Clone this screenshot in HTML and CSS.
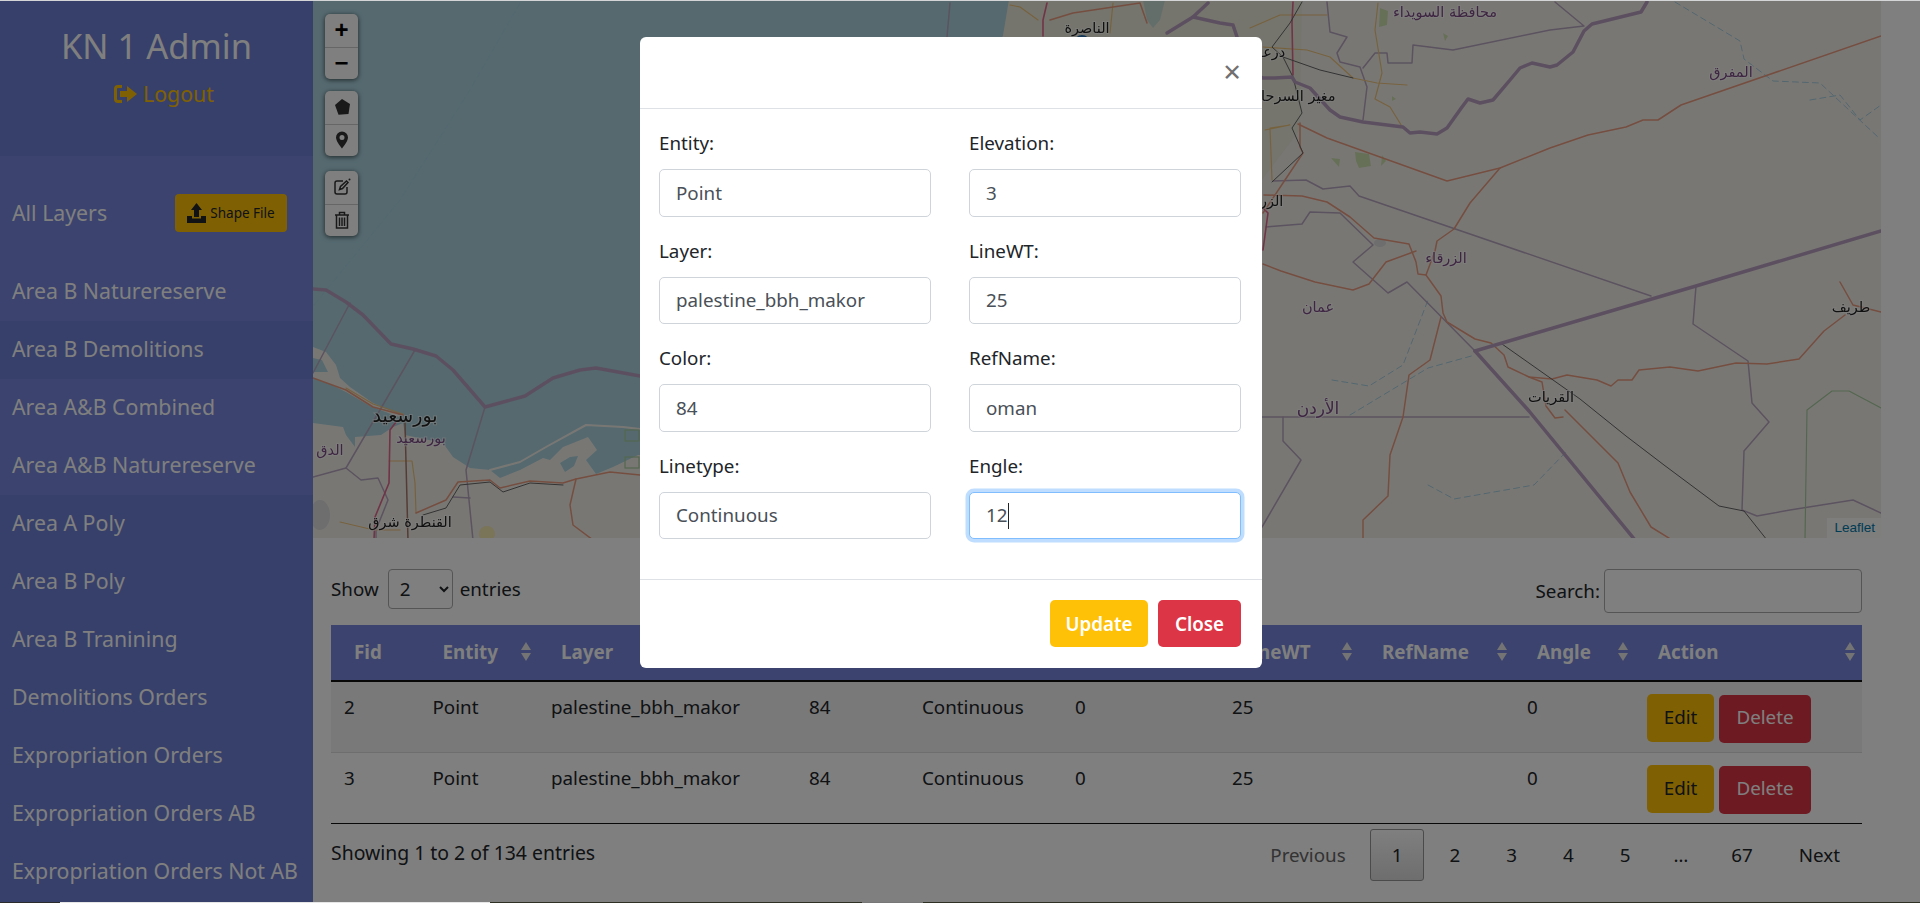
FILE: index.html
```html
<!DOCTYPE html>
<html lang="en">
<head>
  <meta charset="UTF-8">
  <title>KN 1 Admin</title>
  <link rel="stylesheet" href="styles.css">
</head>
<body>
  <div class="edge-top"></div>
  <div class="app">
    <aside class="sidebar">
      <div class="side-head">
        <h1>KN 1 Admin</h1>
        <a class="logout" href="#">
          <svg width="24" height="18" viewBox="0 0 24 18"><path d="M8 0H4a4 4 0 0 0-4 4v10a4 4 0 0 0 4 4h4v-3H4a1 1 0 0 1-1-1V4a1 1 0 0 1 1-1h4zM13 1l10 8-10 8v-5H6V6h7z"/></svg>
          Logout
        </a>
      </div>
      <div class="layers-head">
        <span>All Layers</span>
        <button class="shape-btn">
          <svg width="19" height="20" viewBox="0 0 19 20"><path d="M9.5 0L15 7h-3v7H7V7H4zM0 13h5v2.5h9V13h5v7H0z"/></svg>
          Shape File
        </button>
      </div>
      <ul class="layer-list">
        <li class="lite">Area B Naturereserve</li>
        <li>Area B Demolitions</li>
        <li class="lite">Area A&amp;B Combined</li>
        <li class="lite">Area A&amp;B Naturereserve</li>
        <li>Area A Poly</li>
        <li>Area B Poly</li>
        <li>Area B Tranining</li>
        <li>Demolitions Orders</li>
        <li>Expropriation Orders</li>
        <li>Expropriation Orders AB</li>
        <li>Expropriation Orders Not AB</li>
      </ul>
    </aside>

    <main class="main">
      <div class="map">
        <svg class="map-svg" width="1568" height="537" viewBox="313 1 1568 537">
          <rect class="sea" x="313" y="0" width="1568" height="540"/>
          <!-- land -->
          <polygon class="land" points="313,540 313,423 343,427 346,435 355,447 355,437 381,435 393,427 403,423 405,435 443,443 453,457 470,468 490,470 500,478 520,470 543,458 550,460 563,447 588,437 597,450 586,460 596,474 613,467 638,455 640,455 1003,36 1009,0 1881,0 1881,540"/>
          <polygon class="land" points="313,347 326,352 336,365 340,378 350,387 373,403 396,413 403,418 396,416 370,406 346,392 330,384 313,378"/>
          <polygon class="sea" points="313,358 322,360 328,372 313,372"/>
          <polygon class="sea" points="560,463 570,457 578,456 574,466 565,472"/>
          <polygon class="sea" points="1143,0 1165,0 1160,20 1153,28 1147,20"/>
          <polygon class="tint" points="1009,0 1302,0 1300,130 1262,180 1003,36"/>
          <polyline class="sand" points="490,470 520,462 546,447 586,425 623,427 640,429"/>
          <ellipse class="urban" cx="320" cy="515" rx="10" ry="15"/>
          <ellipse class="urban" cx="1380" cy="243" rx="6" ry="4"/>
          <circle class="desert" cx="487" cy="534" r="8"/>
          <path class="park" d="M1380 8l8 3-1 14-8 2zM1355 152l14 2 2 12-12 2-3-7zM1382 155l4 6-5 5z"/>
          <path class="park" d="M1443 33l5 3-3 5zM1392 96l4 3-4 2zM1331 158l9 1-1 8z"/>
          <!-- wadis -->
          <polyline class="wadi" points="1675,2 1740,41 1744,59 1773,81 1820,83 1879,138"/>
          <polyline class="wadi" points="1332,380 1369,386 1403,365 1428,300"/>
          <polyline class="wadi" points="1350,415 1428,368 1475,355"/>
          <polyline class="wadi" points="1428,485 1454,499 1534,485 1567,451"/>
          <polyline class="wadi" points="1810,100 1840,95 1860,120 1881,105"/>
          <polyline class="wadi" points="520,3 470,90 400,200 314,305"/>
          <!-- boundaries -->
          <polyline class="admin" points="350,303 313,373"/>
          <polyline class="admin" points="415,350 346,468 313,477"/>
          <polyline class="admin" points="346,468 361,480 378,478 388,500 376,530 376,540"/>
          <polyline class="admin" points="485,407 466,470 473,540"/>
          <polyline class="admin" points="453,497 470,498"/>
          <polyline class="admin" points="950,3 947,37"/>
          <polyline class="admin" points="1273,181 1306,180 1323,189 1350,186 1359,196 1651,296"/>
          <polyline class="admin" points="1696,286 1693,324 1748,361 1752,403 1769,422 1744,451 1742,510 1757,516 1790,510 1853,500 1881,513"/>
          <polyline class="admin" points="1266,227 1302,224 1310,212 1340,213 1373,245 1353,262 1388,293 1407,282 1475,351"/>
          <polyline class="admin" points="1262,417 1529,417"/>
          <polyline class="admin" points="1283,417 1283,441 1301,460 1262,527"/>
          <polyline class="admin" points="1327,2 1330,32 1347,37 1337,53 1340,62 1360,67 1367,87 1363,120"/>
          <polyline class="admin" points="1363,68 1375,53 1387,53 1388,63 1412,63 1413,45 1453,50 1550,30 1584,26 1555,2"/>
          <polyline class="natres" points="1881,408 1849,391 1832,391 1807,410 1805,540"/>
          <rect class="natres" x="625" y="430" width="14" height="11"/>
          <rect class="natres" x="625" y="457" width="14" height="11"/>
          <!-- roads -->
          <polyline class="minor" points="389,461 412,461 415,483 416,513"/>
          <polyline class="minor" points="346,388 373,404 403,414"/>
          <polyline class="minor" points="340,522 374,530 400,530"/>
          <polyline class="minor" points="1250,28 1280,15 1327,15"/>
          <polyline class="minor" points="1263,47 1307,50 1330,57 1353,78 1377,83 1407,85"/>
          <polyline class="minor" points="1378,3 1375,30 1382,73 1375,99 1390,107 1403,128"/>
          <polyline class="minor" points="1010,5 1020,7 1038,20"/>
          <polyline class="minor" points="1113,3 1110,33"/>
          <polyline class="minor" points="1265,130 1290,125 1270,128 1272,180"/>
          <polyline class="road" points="313,378 346,390 373,407 403,415"/>
          <polyline class="road" points="416,513 446,500 458,482 490,480 500,488 530,481 563,483 576,479 610,472 640,475"/>
          <polyline class="road" points="576,479 570,505 573,525 593,540"/>
          <polyline class="road" points="1298,124 1327,138 1447,181 1500,168 1550,148 1588,135 1626,127 1643,120 1658,120 1681,105 1881,36"/>
          <polyline class="road" points="1500,168 1470,203 1454,229 1437,241 1435,251 1426,275"/>
          <polyline class="road" points="1264,195 1302,196 1327,202 1350,217 1374,238 1409,244 1416,262 1418,274 1426,275 1441,296 1443,313 1447,322 1475,339 1491,343 1504,355 1508,367 1529,377 1552,379 1567,375 1597,380 1611,386 1618,380 1632,380 1639,370 1670,367 1698,371 1736,363 1767,364 1799,359 1824,331 1845,315"/>
          <polyline class="road" points="1840,282 1853,305 1881,312"/>
          <polyline class="road" points="1263,264 1281,271 1315,282 1353,290 1369,284 1386,262 1416,251"/>
          <polyline class="road" points="1441,317 1430,360 1409,375 1403,417 1390,455 1388,496 1363,520 1363,540"/>
          <polyline class="road" points="1565,410 1618,463 1630,492 1651,527 1672,540"/>
          <polyline class="road" points="1529,377 1542,382 1546,406 1555,418 1563,417"/>
          <polyline class="road" points="1300,123 1300,147 1303,153 1283,183 1263,213"/>
          <polyline class="road" points="1050,20 1073,13 1140,3 1147,23"/>
          <polyline class="pink" points="396,422 390,430 389,483 375,517 374,540"/>
          <polyline class="pink" points="1293,2 1292,23 1293,75"/>
          <polyline class="pink" points="1263,250 1268,213 1263,208"/>
          <polyline class="pink" points="1047,3 1043,20 1043,36"/>
          <polyline class="rail" points="423,515 446,508 460,485 490,482 503,492 530,483 563,485"/>
          <polyline class="rail" points="1302,2 1290,23 1272,47 1283,57 1320,70 1353,78"/>
          <polyline class="rail" points="1283,57 1293,77 1302,113 1292,128 1303,153 1272,182"/>
          <polyline class="rail" points="1502,344 1580,399 1626,436 1664,465 1719,506 1744,511 1767,540"/>
          <polyline class="trunk" points="405,423 408,540"/>
          <!-- thick country borders -->
          <polyline class="border" points="313,289 326,290 346,302 363,315 391,344 413,349 436,356 453,370 485,407 525,396 553,378 580,370 596,368 640,376"/>
          <polyline class="border" points="1647,2 1641,12 1592,24 1584,31 1573,52 1557,65 1550,67 1532,63 1520,68 1510,80 1493,100 1480,103 1468,99 1462,107 1447,128 1437,134 1420,132 1410,133 1403,127 1363,122 1340,117 1330,110 1310,88 1295,82 1292,77 1275,78 1263,78 1240,70"/>
          <polyline class="border" points="1208,3 1193,17 1220,23 1233,25 1237,37"/>
          <polyline class="border" points="1167,33 1193,17"/>
          <polyline class="border" points="1475,351 1696,286 1881,231"/>
          <polyline class="border" points="1475,351 1529,411 1635,540"/>
          <circle class="pin" cx="1082" cy="43" r="8"/>
          <!-- labels -->
          <text class="lbl city huge" x="405" y="422">بورسعيد</text>
          <text class="lbl region" x="421" y="443">بورسعيد</text>
          <text class="lbl region" x="330" y="455">الدق</text>
          <text class="lbl city" x="410" y="527">القنطرة شرق</text>
          <text class="lbl city" x="1087" y="33">الناصرة</text>
          <text class="lbl region" x="1445" y="17">محافظة السويداء</text>
          <text class="lbl city" x="1272" y="57">درعا</text>
          <text class="lbl city" x="1293" y="101">مغير السرحان</text>
          <text class="lbl city" x="1266" y="206">الزرقا</text>
          <text class="lbl region" x="1446" y="263">الزرقاء</text>
          <text class="lbl region" x="1731" y="77">المفرق</text>
          <text class="lbl region" x="1318" y="312">عمان</text>
          <text class="lbl region big" x="1318" y="414">الأردن</text>
          <text class="lbl city" x="1551" y="402">القريات</text>
          <text class="lbl city" x="1851" y="312">طريف</text>
        </svg>

        <div class="map-controls">
          <div class="ctl-group">
            <a class="ctl zoom-ctl">+</a>
            <a class="ctl zoom-ctl">&#8722;</a>
          </div>
          <div class="ctl-group">
            <a class="ctl"><svg width="20" height="20" viewBox="0 0 20 20"><path class="ico-fill" d="M10 2l8 5-1.5 10-10 .8L3 8z"/></svg></a>
            <a class="ctl"><svg width="16" height="20" viewBox="0 0 16 20"><path class="ico-fill" d="M8 1.500a6 6 0 0 0-6 6c0 4 6 11 6 11s6-7 6-11a6 6 0 0 0-6-6zm0 3.500a2.500 2.500 0 1 1 0 5 2.500 2.500 0 0 1 0-5z" fill-rule="evenodd"/></svg></a>
          </div>
          <div class="ctl-group draw-group">
            <a class="ctl"><svg width="20" height="20" viewBox="0 0 20 20"><path class="ico-line" d="M11 4H5a2 2 0 0 0-2 2v9a2 2 0 0 0 2 2h8a2 2 0 0 0 2-2v-5"/><path class="ico-line" d="M7.500 12.500l1-3 6-5.500 1.500 1.500-5.500 6z"/><circle class="ico-fill" cx="17.500" cy="2.500" r="1"/></svg></a>
            <a class="ctl"><svg width="18" height="20" viewBox="0 0 18 20"><path class="ico-line" d="M2 5h14M6.500 5V2.500h5V5M3.500 5v13h11V5M6.500 7.500V16M9 7.500V16M11.500 7.500V16"/></svg></a>
          </div>
        </div>
        <div class="attribution"><a href="#">Leaflet</a></div>
      </div>

      <section class="tools">
        <div class="dt-top">
          <label class="dt-length">Show
            <select><option>2</option><option>10</option><option>25</option></select>
            entries</label>
          <label class="dt-search">Search:<input type="text"></label>
        </div>

        <table class="dt">
          <colgroup>
            <col class="c-fid"><col class="c-entity"><col class="c-layer"><col class="c-color"><col class="c-linetype">
            <col class="c-elev"><col class="c-linewt"><col class="c-ref"><col class="c-angle"><col class="c-action">
          </colgroup>
          <thead>
            <tr>
              <th>Fid</th>
              <th class="sort">Entity<svg width="10" height="19" viewBox="0 0 10 19"><path d="M5 0l5 8H0zM5 19l-5-8h10z"/></svg></th>
              <th class="sort">Layer<svg width="10" height="19" viewBox="0 0 10 19"><path d="M5 0l5 8H0zM5 19l-5-8h10z"/></svg></th>
              <th class="sort">Color<svg width="10" height="19" viewBox="0 0 10 19"><path d="M5 0l5 8H0zM5 19l-5-8h10z"/></svg></th>
              <th class="sort">Linetype<svg width="10" height="19" viewBox="0 0 10 19"><path d="M5 0l5 8H0zM5 19l-5-8h10z"/></svg></th>
              <th class="sort">Elevation<svg width="10" height="19" viewBox="0 0 10 19"><path d="M5 0l5 8H0zM5 19l-5-8h10z"/></svg></th>
              <th class="sort">LineWT<svg width="10" height="19" viewBox="0 0 10 19"><path d="M5 0l5 8H0zM5 19l-5-8h10z"/></svg></th>
              <th class="sort">RefName<svg width="10" height="19" viewBox="0 0 10 19"><path d="M5 0l5 8H0zM5 19l-5-8h10z"/></svg></th>
              <th class="sort">Angle<svg width="10" height="19" viewBox="0 0 10 19"><path d="M5 0l5 8H0zM5 19l-5-8h10z"/></svg></th>
              <th class="sort">Action<svg width="10" height="19" viewBox="0 0 10 19"><path d="M5 0l5 8H0zM5 19l-5-8h10z"/></svg></th>
            </tr>
          </thead>
          <tbody>
            <tr>
              <td>2</td><td>Point</td><td>palestine_bbh_makor</td><td>84</td><td>Continuous</td><td>0</td><td>25</td><td></td><td>0</td>
              <td class="actions"><button class="btn-edit">Edit</button><button class="btn-del">Delete</button></td>
            </tr>
            <tr>
              <td>3</td><td>Point</td><td>palestine_bbh_makor</td><td>84</td><td>Continuous</td><td>0</td><td>25</td><td></td><td>0</td>
              <td class="actions"><button class="btn-edit">Edit</button><button class="btn-del">Delete</button></td>
            </tr>
          </tbody>
        </table>

        <div class="dt-bottom">
          <div class="dt-info">Showing 1 to 2 of 134 entries</div>
          <div class="pager">
            <a class="off">Previous</a>
            <a class="current">1</a>
            <a>2</a>
            <a>3</a>
            <a>4</a>
            <a>5</a>
            <span>&hellip;</span>
            <a>67</a>
            <a>Next</a>
          </div>
        </div>
      </section>
    </main>

    <div class="backdrop">
      <div class="modal">
        <div class="modal-head"><span class="close-x">&times;</span></div>
        <form class="modal-body">
          <div class="field"><label>Entity:</label><input type="text" value="Point"></div>
          <div class="field"><label>Elevation:</label><input type="text" value="3"></div>
          <div class="field"><label>Layer:</label><input type="text" value="palestine_bbh_makor"></div>
          <div class="field"><label>LineWT:</label><input type="text" value="25"></div>
          <div class="field"><label>Color:</label><input type="text" value="84"></div>
          <div class="field"><label>RefName:</label><input type="text" value="oman"></div>
          <div class="field"><label>Linetype:</label><input type="text" value="Continuous"></div>
          <div class="field"><label>Engle:</label>
            <div class="caret-wrap"><input class="focused" type="text" value="12"><span class="caret"></span></div>
          </div>
        </form>
        <div class="modal-foot">
          <button class="btn-update">Update</button>
          <button class="btn-close">Close</button>
        </div>
      </div>
    </div>
  </div>
  <div class="edge-bottom"></div>
</body>
</html>
```

FILE: styles.css
```css
* {
  box-sizing: border-box;
}
html, body {
  margin: 0;
  height: 903px;
  overflow: hidden;
}
body {
  font-family: "Noto Sans", "Open Sans", sans-serif;
  font-size: 18.800px;
  color: #212529;
  background-color: #ffffff;
}
button, input, select {
  font-family: inherit;
  font-size: inherit;
}
a {
  text-decoration: none;
  color: inherit;
}

.edge-top {
  height: 1px;
  background-color: #d4d5d6;
}
.edge-bottom {
  height: 1px;
  background: linear-gradient(to right, #2b2b2b 60px, #e6e6e6 60px, #e6e6e6 490px, #2e3024 490px, #2e3024 862px, #777777 862px, #777777 923px, #2e3024 923px);
}
.app {
  position: relative;
  display: flex;
  height: 901px;
}

/* sidebar */
.sidebar {
  width: 313px;
  flex: none;
  display: flex;
  flex-direction: column;
  background-color: #6e80d4;
  color: #ffffff;
  font-size: 21.300px;
}
.side-head {
  height: 155px;
  padding-top: 25px;
  text-align: center;
}
.side-head h1 {
  margin: 0;
  font-size: 34.500px;
  font-weight: 400;
  line-height: 40px;
}
.logout {
  display: inline-flex;
  align-items: center;
  gap: 5px;
  margin: 13px 0 0 15px;
  color: #ffc107;
}
.logout svg {
  fill: #ffc107;
}
.layers-head {
  height: 107px;
  padding: 6px 26px 0 12px;
  display: flex;
  align-items: center;
  justify-content: space-between;
  background-color: #7686dc;
}
.shape-btn {
  width: 112px;
  height: 38px;
  display: flex;
  align-items: center;
  justify-content: center;
  gap: 4px;
  border: none;
  border-radius: 4px;
  background-color: #ffc107;
  color: #212529;
  font-size: 13.500px;
}
.shape-btn svg {
  fill: #212529;
}
.layer-list {
  list-style: none;
  margin: 0;
  padding: 0;
}
.layer-list li {
  height: 58px;
  padding-left: 12px;
  line-height: 56px;
  white-space: nowrap;
}
.layer-list .lite {
  background-color: #7686dc;
}

/* map */
.main {
  flex: 1;
  min-width: 0;
}
.map {
  position: relative;
  width: 1568px;
  height: 537px;
  overflow: hidden;
}
.map-svg {
  display: block;
  filter: blur(.5px);
}
.sea {
  fill: #aad3df;
}
.land {
  fill: #f2efe9;
}
.tint {
  fill: #e4e6cc;
  opacity: .5;
}
.sand {
  fill: none;
  stroke: #f2efe9;
  stroke-width: 2;
}
.urban {
  fill: #dcdcdc;
}
.desert {
  fill: #f4e8b0;
}
.park {
  fill: #cde0ae;
}
.map-svg polyline {
  fill: none;
  stroke-linejoin: round;
  stroke-linecap: round;
}
.map-svg .wadi {
  stroke: #a6cfe0;
  stroke-width: 1;
  stroke-dasharray: 6 4;
}
.map-svg .admin {
  stroke: #b7a6be;
  stroke-width: 1.500;
}
.natres {
  fill: none;
  stroke: #a8cda0;
  stroke-width: 1.200;
}
.map-svg .natres {
  stroke: #a8cda0;
}
.map-svg .minor {
  stroke: #eec47c;
  stroke-width: 1.200;
}
.map-svg .road {
  stroke: #ea9c80;
  stroke-width: 1.500;
}
.map-svg .pink {
  stroke: #e0688e;
  stroke-width: 1.600;
}
.map-svg .rail {
  stroke: #666666;
  stroke-width: 1;
}
.map-svg .trunk {
  stroke: #a87868;
  stroke-width: 1.500;
}
.map-svg .border {
  stroke: #b8a0c0;
  stroke-width: 3.500;
}
.pin {
  fill: #2a6fb0;
}
.lbl {
  font-family: "DejaVu Sans", sans-serif;
  font-size: 14.500px;
  text-anchor: middle;
  paint-order: stroke;
  stroke: rgba(255, 255, 255, .6);
  stroke-width: 2px;
}
.city {
  fill: #222222;
}
.region {
  fill: #7d4c85;
}
.big {
  font-size: 17px;
}
.huge {
  font-size: 19px;
}
.map-controls {
  position: absolute;
  top: 13px;
  left: 12px;
  display: flex;
  flex-direction: column;
  gap: 12px;
}
.ctl-group {
  width: 33px;
  border-radius: 5px;
  background-color: #ffffff;
  box-shadow: 0 1px 5px rgba(0, 0, 0, .65);
}
.draw-group {
  margin-top: 3px;
}
.ctl {
  height: 32.500px;
  display: flex;
  align-items: center;
  justify-content: center;
  color: #000000;
}
.ctl + .ctl {
  border-top: 1px solid #cccccc;
}
.zoom-ctl {
  font-family: "Liberation Sans", sans-serif;
  font-size: 24px;
  font-weight: 700;
}
.ico-fill {
  fill: #333333;
}
.ico-line {
  fill: none;
  stroke: #333333;
  stroke-width: 1.500;
}
.attribution {
  position: absolute;
  right: 0;
  bottom: 0;
  height: 20px;
  padding: 0 6px 0 7px;
  background-color: rgba(255, 255, 255, .8);
  font-family: "Liberation Sans", sans-serif;
  font-size: 13.500px;
  line-height: 20px;
}
.attribution a {
  color: #0078a8;
}

/* table area */
.tools {
  padding: 31px 58px 0 18px;
}
.dt-top {
  height: 44px;
  display: flex;
  justify-content: space-between;
}
.dt-length {
  height: 40px;
  display: flex;
  align-items: center;
  gap: 7px;
}
.dt-length select {
  width: 65px;
  height: 40px;
  margin-left: 2px;
  padding: 4px 7px;
  background-color: #ffffff;
  border: 1px solid #aaaaaa;
  border-radius: 4px;
  color: #212529;
}
.dt-search {
  display: flex;
  align-items: center;
  gap: 4px;
}
.dt-search input {
  width: 258px;
  height: 44px;
  border: 1px solid #aaaaaa;
  border-radius: 4px;
  background: transparent;
}
.dt {
  width: 1531px;
  margin-top: 12px;
  border-collapse: collapse;
  table-layout: fixed;
  border-bottom: 1px solid #111111;
}
.c-fid { width: 88.500px; }
.c-entity { width: 118.500px; }
.c-layer { width: 258px; }
.c-color { width: 113px; }
.c-linetype { width: 153px; }
.c-elev { width: 157px; }
.c-linewt { width: 140px; }
.c-ref { width: 155px; }
.c-angle { width: 121px; }
.c-action { width: 227px; }
.dt th {
  height: 56px;
  padding: 0 7px 2px 23px;
  background-color: #7686dc;
  color: #ffffff;
  text-align: left;
  font-weight: 700;
  border-bottom: 2px solid #111111;
}
.dt th svg {
  float: right;
  margin-top: 3px;
  fill: #e8e8e8;
}
.dt td {
  height: 71px;
  padding: 12px 13px 0;
  vertical-align: top;
}
.dt tbody tr:nth-child(odd) {
  background-color: #f2f2f2;
}
.dt tbody tr + tr td {
  border-top: 1px solid #dddddd;
}
.actions {
  white-space: nowrap;
}
.dt .actions {
  padding-left: 12px;
  padding-top: 12px;
}
.btn-edit, .btn-del {
  height: 48px;
  padding: 0 0 2px;
  border: none;
  border-radius: 5px;
  vertical-align: top;
}
.btn-edit {
  width: 67px;
  background-color: #ffc107;
  color: #212529;
}
.btn-del {
  width: 92px;
  margin: 1px 0 0 5px;
  padding-bottom: 4px;
  background-color: #dc3545;
  color: #ffffff;
}
.dt-bottom {
  margin-top: 5px;
  display: flex;
  justify-content: space-between;
  align-items: center;
}
.dt-info {
  margin-top: -4px;
  font-size: 19.400px;
}
.pager {
  display: flex;
  align-items: center;
  gap: 2px;
}
.pager a, .pager span {
  height: 52px;
  padding: 0 21px;
  display: flex;
  align-items: center;
  border: 1px solid transparent;
}
.pager span {
  padding: 0 18px;
}
.pager .off {
  color: #666666;
}
.pager .current {
  margin-right: 1px;
  border: 1px solid #979797;
  border-radius: 3px;
  background: linear-gradient(to bottom, #ffffff 0%, #dcdcdc 100%);
}

/* modal */
.backdrop {
  position: absolute;
  inset: 0;
  display: flex;
  justify-content: center;
  padding: 36px 18px 0 0;
  background-color: rgba(0, 0, 0, .5);
}
.modal {
  width: 622px;
  height: 631px;
  display: flex;
  flex-direction: column;
  background-color: #ffffff;
  border-radius: 6px;
}
.modal-head {
  height: 72px;
  flex: none;
  padding: 0 21px 3px 0;
  display: flex;
  justify-content: flex-end;
  align-items: center;
  border-bottom: 1px solid #dee2e6;
}
.close-x {
  font-size: 31px;
  line-height: 1;
  color: #707070;
}
.modal-body {
  height: 470px;
  flex: none;
  padding: 21px 21px 0 19px;
  display: grid;
  grid-template-columns: 272px 272px;
  column-gap: 38px;
  grid-auto-rows: 107.500px;
}
.field label {
  display: block;
  height: 26px;
  margin-bottom: 13px;
  line-height: 26px;
}
.field input {
  width: 100%;
  height: 47.500px;
  padding: 0 16px;
  border: 1px solid #ced4da;
  border-radius: 5px;
  color: #495057;
  background-color: #ffffff;
}
.caret-wrap {
  position: relative;
}
.field .focused {
  border-color: #80bdff;
  box-shadow: 0 0 0 3.500px rgba(0, 123, 255, .25);
}
.caret {
  position: absolute;
  top: 11px;
  left: 39px;
  width: 1px;
  height: 26px;
  background-color: #212529;
}
.modal-foot {
  flex: 1;
  padding: 20px 21px 0 0;
  display: flex;
  justify-content: flex-end;
  align-items: flex-start;
  gap: 10px;
  border-top: 1px solid #dee2e6;
}
.btn-update, .btn-close {
  height: 47px;
  border: none;
  border-radius: 5px;
  color: #ffffff;
  font-weight: 600;
}
.btn-update {
  width: 98px;
  background-color: #ffc107;
}
.btn-close {
  width: 83px;
  background-color: #dc3545;
}
```
